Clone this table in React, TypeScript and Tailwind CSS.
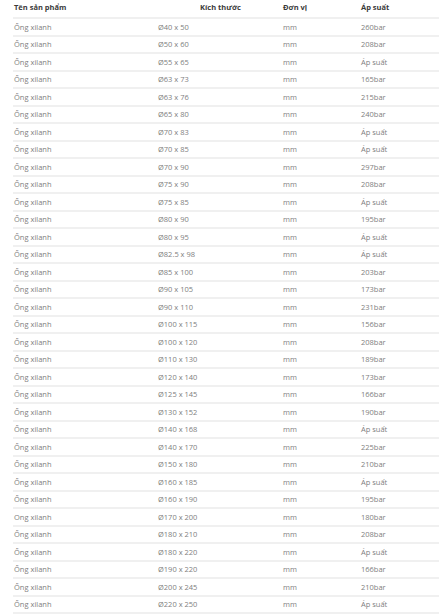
import React from "react";

const sizes = [
  "Ø40 x 50","Ø50 x 60","Ø55 x 65","Ø63 x 73","Ø63 x 76","Ø65 x 80","Ø70 x 83","Ø70 x 85","Ø70 x 90","Ø75 x 90","Ø75 x 85","Ø80 x 90","Ø80 x 95","Ø82.5 x 98","Ø85 x 100","Ø90 x 105","Ø90 x 110","Ø100 x 115","Ø100 x 120","Ø110 x 130","Ø120 x 140","Ø125 x 145","Ø130 x 152","Ø140 x 168","Ø140 x 170","Ø150 x 180","Ø160 x 185","Ø160 x 190","Ø170 x 200","Ø180 x 210","Ø180 x 220","Ø190 x 220","Ø200 x 245","Ø220 x 250",
];
const pressures = [
  "260bar","208bar","Áp suất","165bar","215bar","240bar","Áp suất","Áp suất","297bar","208bar","Áp suất","195bar","Áp suất","Áp suất","203bar","173bar","231bar","156bar","208bar","189bar","173bar","166bar","190bar","Áp suất","225bar","210bar","Áp suất","195bar","180bar","208bar","Áp suất","166bar","210bar","Áp suất",
];

export default function App() {
  return (
    <div className="w-[446px] h-[614px] overflow-hidden bg-white" style={{ fontFamily: '"Open Sans", "Noto Sans", sans-serif' }}>
      <div className="ml-[13px] w-[426px]">
        <div className="grid grid-cols-[145px_125px_78px_1fr] h-[19px] items-center border-b-2 border-[#f0f0f0] text-[7.5px] font-bold text-[#3a3a3a] pb-[1px]">
          <div className="pl-[1px]">Tên sản phẩm</div>
          <div className="text-center">Kích thước</div>
          <div>Đơn vị</div>
          <div>Áp suất</div>
        </div>
        {sizes.map((s, i) => (
          <div key={i} className="grid grid-cols-[145px_125px_78px_1fr] h-[17.5px] items-center border-b-2 border-[#f0f0f0] text-[7.5px] text-[#808080] pt-[1px]">
            <div className="pl-[1px]">{i === 28 ? "Ong xilanh" : "Ống xilanh"}</div>
            <div>{s}</div>
            <div>mm</div>
            <div>{pressures[i]}</div>
          </div>
        ))}
      </div>
    </div>
  );
}
